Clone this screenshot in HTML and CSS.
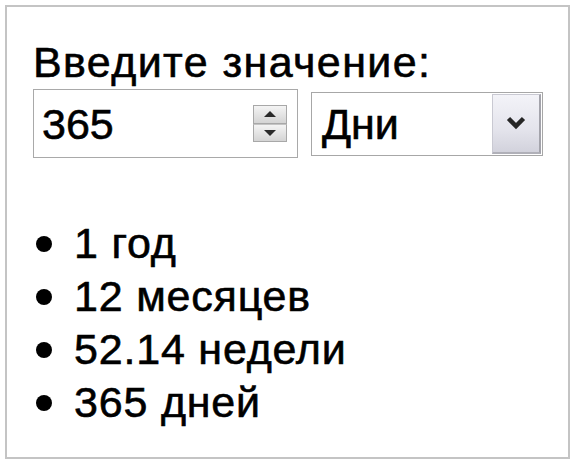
FILE: index.html
```html
<!DOCTYPE html>
<html lang="ru">
<head>
<meta charset="utf-8">
<title>Введите значение</title>
<link rel="stylesheet" href="styles.css">
</head>
<body>
<div class="panel">
  <div class="title">Введите значение:</div>
  <div class="controls">
    <div class="spin-field">
      <span class="value">365</span>
      <div class="spinner">
        <div class="spin-btn">
          <svg width="14" height="8" viewBox="0 0 14 8"><path d="M1 7 L7 1 L13 7 Z" fill="#2a2a2a"/></svg>
        </div>
        <div class="spin-btn">
          <svg width="14" height="8" viewBox="0 0 14 8"><path d="M1 1 L7 7 L13 1 Z" fill="#2a2a2a"/></svg>
        </div>
      </div>
    </div>
    <div class="select">
      <span class="value">Дни</span>
      <div class="drop-btn">
        <svg width="20" height="14" viewBox="0 0 20 14"><path d="M2.5 2.5 L10 10 L17.5 2.5" fill="none" stroke="#262626" stroke-width="4.5" stroke-linejoin="miter"/></svg>
      </div>
    </div>
  </div>
  <ul class="results">
    <li class="item"><span class="dot"></span><span>1 год</span></li>
    <li class="item"><span class="dot"></span><span>12 месяцев</span></li>
    <li class="item"><span class="dot"></span><span>52.14 недели</span></li>
    <li class="item"><span class="dot"></span><span>365 дней</span></li>
  </ul>
</div>
</body>
</html>
```

FILE: styles.css
```css
html, body {
  margin: 0;
  padding: 0;
  background: #ffffff;
}

body {
  font-family: "Liberation Sans", Arial, sans-serif;
  color: #000000;
  -webkit-text-stroke: 0.6px #000000;
}

.panel {
  box-sizing: border-box;
  margin: 5px;
  width: 565px;
  height: 454px;
  border: 2px solid #c4c4c4;
  padding: 33px 0 0 26px;
}

.title {
  font-size: 43px;
  line-height: 44px;
  letter-spacing: 1.4px;
  white-space: nowrap;
}

.controls {
  display: flex;
  align-items: center;
  gap: 13px;
  margin-top: 5px;
}

.spin-field {
  box-sizing: border-box;
  width: 265px;
  height: 69px;
  border: 1px solid #a9a9a9;
  display: flex;
  align-items: center;
  justify-content: space-between;
  padding: 0 10px 0 8px;
}

.value {
  font-size: 43px;
  line-height: 44px;
}

.spinner {
  display: flex;
  flex-direction: column;
  width: 34px;
  height: 37px;
}

.spin-btn {
  box-sizing: border-box;
  flex: 1;
  display: flex;
  align-items: center;
  justify-content: center;
  border: 1px solid #a8a8a8;
  background: linear-gradient(#f4f4f4, #d4d4d4);
}

.spin-btn + .spin-btn {
  border-top-color: #c4c4c4;
}

.select {
  box-sizing: border-box;
  width: 232px;
  height: 64px;
  border: 1px solid #a7a7a7;
  display: flex;
  align-items: center;
  justify-content: space-between;
  padding: 0 1px 0 10px;
}

.drop-btn {
  box-sizing: border-box;
  width: 49px;
  height: 60px;
  display: flex;
  align-items: center;
  justify-content: center;
  border: 1px solid #c9c9d2;
  border-right: 2px solid #a3a3ab;
  border-bottom: 2px solid #b0b0b8;
  background: linear-gradient(#f3f3f8, #e4e4ec 60%, #d2d2dc);
}

.results {
  list-style: none;
  margin: 59px 0 0 0;
  padding: 0;
}

.item {
  display: flex;
  align-items: center;
  font-size: 43px;
  line-height: 53px;
  height: 53px;
  letter-spacing: 0.8px;
  white-space: nowrap;
}

.dot {
  width: 16px;
  height: 16px;
  border-radius: 50%;
  background: #000000;
  margin: 0 22px 0 3px;
  flex: none;
}
```
